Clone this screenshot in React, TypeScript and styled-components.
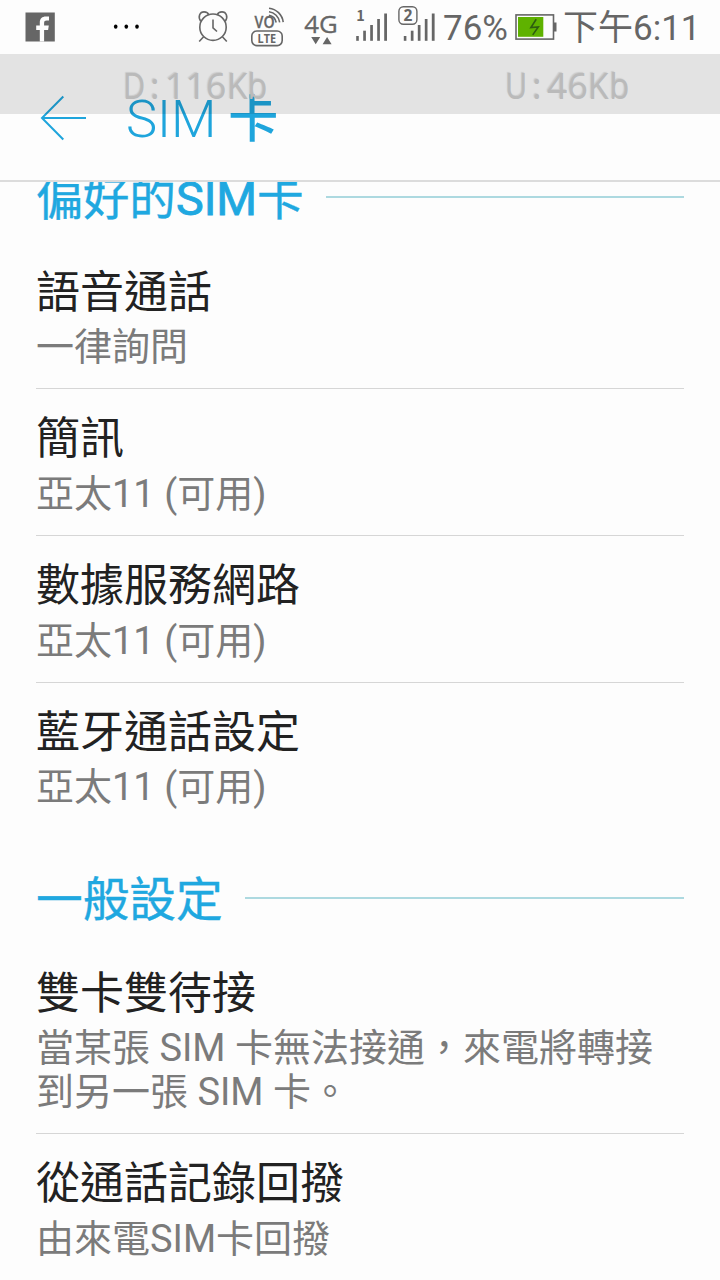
import React from 'react';
import styled, { createGlobalStyle } from 'styled-components';

const GlobalStyle = createGlobalStyle`
  * { box-sizing: border-box; }
  body {
    margin: 0;
    background: #fdfdfd;
    font-family: Roboto, 'Noto Sans CJK TC', sans-serif;
  }
`;

const Screen = styled.div`
  position: relative;
  width: 720px;
  height: 1280px;
  overflow: hidden;
  background: #fdfdfd;
  display: flex;
  flex-direction: column;
`;

const Top = styled.header`
  position: relative;
  z-index: 1;
  flex: none;
  height: 182px;
  background: #fdfdfd;
  border-bottom: 2px solid #dcdcdc;
`;

const StatusBar = styled.div`
  height: 54px;
  display: flex;
  align-items: flex-start;
  color: #666;
`;

const StatusIcon = styled.svg<{ $gap?: number }>`
  flex: none;
  height: 54px;
  margin-left: ${({ $gap = 0 }) => $gap}px;
  overflow: visible;
`;

const StatusText = styled.span<{ $gap: number; $width: number }>`
  flex: none;
  width: ${({ $width }) => $width}px;
  margin-left: ${({ $gap }) => $gap}px;
  font-size: 35px;
  line-height: 58px;
  white-space: nowrap;
`;

const TitleBar = styled.div`
  height: 126px;
  padding: 2px 0 0 40px;
  display: flex;
  align-items: center;
  color: #1fa5dc;
`;

const BackIcon = styled.svg`
  width: 47px;
  height: 46px;
  fill: none;
  stroke: currentColor;
  stroke-width: 2;
`;

const Title = styled.h1`
  margin: 3px 0 0 39px;
  font-size: 52.5px;
  line-height: 60px;
  font-weight: 300;
  white-space: pre;
`;

const TitleHan = styled.span`
  margin-left: -1px;
  font-size: 50px;
  font-weight: 500;
`;

const SpeedOverlay = styled.div`
  position: absolute;
  top: 54px;
  left: 0;
  width: 720px;
  height: 60px;
  padding: 0 0 0 124px;
  background: rgba(0, 0, 0, 0.1);
  display: flex;
`;

const Speed = styled.span<{ $width: number }>`
  flex: none;
  width: ${({ $width }) => $width}px;
  font-family: 'Noto Sans', sans-serif;
  font-size: 35.5px;
  line-height: 63px;
  color: #bababa;
  text-shadow: -1px -1px 1px rgba(120, 120, 120, 0.22);
  white-space: nowrap;
`;

const MonoCell = styled.span<{ $squeeze?: number }>`
  display: inline-flex;
  justify-content: center;
  width: 20.5px;
  transform: scaleX(${({ $squeeze = 1 }) => $squeeze});
`;

const List = styled.main`
  margin-top: -53.6px;
`;

const Category = styled.h2`
  margin: 0;
  height: 114.3px;
  padding: 23px 36px 0;
  display: flex;
  align-items: center;
  gap: 22px;
  font-size: 46.67px;
  line-height: 56px;
  font-weight: 400;
  color: #1fa8e0;
  white-space: nowrap;

  &::after {
    content: '';
    flex: 1;
    height: 2px;
    background: #add9e0;
  }
`;

const CategoryText = styled.span`
  padding-top: 3px;
  margin-bottom: -1px;
  -webkit-text-stroke: 0.4px currentColor;
`;

const Latin = styled.span`
  -webkit-text-stroke: 0.9px currentColor;
`;

const Item = styled.section`
  margin: 0 36px;
  padding: 24px 0 19.17px;
  border-bottom: 1px solid #d6d6d6;

  &:last-child { border-bottom-color: transparent; }
`;

const ItemTitle = styled.h3`
  margin: 0 0 6.5px;
  font-size: 44px;
  line-height: 52px;
  font-weight: 400;
  color: #222;
`;

const Summary = styled.p`
  margin: 0;
  font-size: 38px;
  line-height: 44px;
  color: #7b7b7b;
  white-space: pre-line;
`;

type Entry = { title: string; summary: string };

const groups: { name: React.ReactNode; items: Entry[] }[] = [
  {
    name: <>偏好的<Latin>SIM</Latin>卡</>,
    items: [
      { title: '語音通話', summary: '一律詢問' },
      { title: '簡訊', summary: '亞太11 (可用)' },
      { title: '數據服務網路', summary: '亞太11 (可用)' },
      { title: '藍牙通話設定', summary: '亞太11 (可用)' },
    ],
  },
  {
    name: '一般設定',
    items: [
      { title: '雙卡雙待接', summary: '當某張 SIM 卡無法接通，來電將轉接\n到另一張 SIM 卡。' },
      { title: '從通話記錄回撥', summary: '由來電SIM卡回撥' },
    ],
  },
];

const squeeze: Record<string, number> = { D: 0.86, U: 0.86, K: 0.95, b: 0.92 };

const Mono = ({ text }: { text: string }) => (
  <>
    {text.split('').map((c, i) => (
      <MonoCell key={i} $squeeze={squeeze[c]}>{c}</MonoCell>
    ))}
  </>
);

const SignalBars = ({ x }: { x: number }) => (
  <g fill="#666">
    <rect x={x} y="36" width="2.6" height="4.8" />
    <rect x={x + 7} y="30.7" width="2.7" height="10.1" />
    <rect x={x + 14} y="25" width="2.7" height="15.8" />
    <rect x={x + 21} y="19" width="2.7" height="21.8" />
    <rect x={x + 28} y="13.5" width="2.8" height="27.3" />
  </g>
);

export default function App() {
  return (
    <>
      <GlobalStyle />
      <Screen>
        <Top>
          <StatusBar>
            <StatusIcon $gap={25} width="30" viewBox="0 0 30 54">
              <rect x="0.5" y="12.5" width="29.3" height="29" fill="#666" />
              <path d="M14.8 41.5V29.9h-3.6v-4.3h3.6v-3.2c0-4 2.4-6 6-6h3.2v4h-2.2c-2 0-2.7.8-2.7 2.5v2.7h4.7l-.7 4.3h-4v11.6z" fill="#fdfdfd" />
            </StatusIcon>
            <StatusIcon $gap={58} width="26" viewBox="0 0 26 54">
              <g fill="#000">
                <ellipse cx="2.7" cy="26.6" rx="1.8" ry="2.2" />
                <ellipse cx="13.3" cy="26.6" rx="1.8" ry="2.2" />
                <ellipse cx="24" cy="26.6" rx="1.8" ry="2.2" />
              </g>
            </StatusIcon>
            <StatusIcon $gap={59} width="30" viewBox="0 0 30 54">
              <g fill="none" stroke="#666" strokeWidth="1.6">
                <circle cx="15" cy="27.2" r="13.2" />
                <path d="M2.7 21.2C-.5 16.5 2 11.9 6 11.9c2.7 0 4.2 1.3 4.8 3M27.3 21.2c3.2-4.7.7-9.3-3.3-9.3-2.7 0-4.2 1.3-4.8 3M5.6 36.8l-4.4 4.7M24.4 36.8l4.4 4.7M15 19.5v8.3l4 3.7" />
              </g>
            </StatusIcon>
            <StatusIcon $gap={23} width="34" viewBox="0 0 34 54">
              <text x="3.6" y="27.8" fontFamily="Open Sans" fontWeight="600" fontSize="16.5" textLength="20" lengthAdjust="spacingAndGlyphs" fill="#666" stroke="#666" strokeWidth="0.3">VO</text>
              <g fill="none" stroke="#666" strokeWidth="1.6">
                <path d="M18 15.2a9 9 0 0 1 7.2 7.3M18 11.7a12.5 12.5 0 0 1 10.7 10.6M18 8.2a16 16 0 0 1 14.2 13.9" />
                <rect x="0.8" y="31" width="30.4" height="14.6" rx="5" />
              </g>
              <text x="6.5" y="43" fontFamily="Open Sans" fontWeight="700" fontSize="12.3" textLength="18.5" lengthAdjust="spacingAndGlyphs" fill="#666">LTE</text>
            </StatusIcon>
            <StatusIcon $gap={20} width="34" viewBox="0 0 34 54">
              <text x="-0.8" y="33" fontFamily="Open Sans" fontSize="24.5" textLength="33.5" lengthAdjust="spacingAndGlyphs" fill="#666" stroke="#666" strokeWidth="0.3">4G</text>
              <path d="M6.2 37h9l-4.5 7.2zM17.6 44.2h9L22.1 37z" fill="#666" />
            </StatusIcon>
            <StatusIcon $gap={16} width="34" viewBox="355 0 34 54">
              <text x="356.2" y="21" fontFamily="Noto Sans CJK TC" fontWeight="700" fontSize="14.5" fill="#666">1</text>
              <SignalBars x={356.2} />
            </StatusIcon>
            <StatusIcon $gap={9} width="38" viewBox="398 0 38 54">
              <SignalBars x={403.8} />
              <rect x="398.9" y="6.7" width="18" height="17.6" rx="4.5" fill="#fdfdfd" stroke="#666" strokeWidth="1.4" />
              <text x="403.4" y="21" fontFamily="Open Sans" fontWeight="700" fontSize="15.5" fill="#666">2</text>
            </StatusIcon>
            <StatusText $gap={7} $width={64}>76%</StatusText>
            <StatusIcon $gap={8} width="42" viewBox="515 0 42 54">
              <rect x="516" y="14.9" width="37.5" height="24.2" fill="none" stroke="#666" strokeWidth="1.6" />
              <rect x="518" y="17" width="25.3" height="19.8" fill="#5fb200" />
              <rect x="554" y="22.5" width="2.5" height="9" fill="#666" />
              <path d="M536.2 19.2l-5.3 8.3 7.4-.6-5.6 8" fill="none" stroke="#2e5c10" strokeWidth="1.6" />
            </StatusIcon>
            <StatusText $gap={6} $width={150}>下午6:11</StatusText>
          </StatusBar>
          <TitleBar>
            <BackIcon viewBox="0 0 47 46">
              <path d="M23.3 1.5L2 23l21.3 21.5M2 23h44" />
            </BackIcon>
            <Title>SIM <TitleHan>卡</TitleHan></Title>
          </TitleBar>
          <SpeedOverlay>
            <Speed $width={382}><Mono text="D:116Kb" /></Speed>
            <Speed $width={150}><Mono text="U:46Kb" /></Speed>
          </SpeedOverlay>
        </Top>
        <List>
          {groups.map((group, index) => (
            <div key={index}>
              <Category><CategoryText>{group.name}</CategoryText></Category>
              {group.items.map((item) => (
                <Item key={item.title}>
                  <ItemTitle>{item.title}</ItemTitle>
                  <Summary>{item.summary}</Summary>
                </Item>
              ))}
            </div>
          ))}
        </List>
      </Screen>
    </>
  );
}
